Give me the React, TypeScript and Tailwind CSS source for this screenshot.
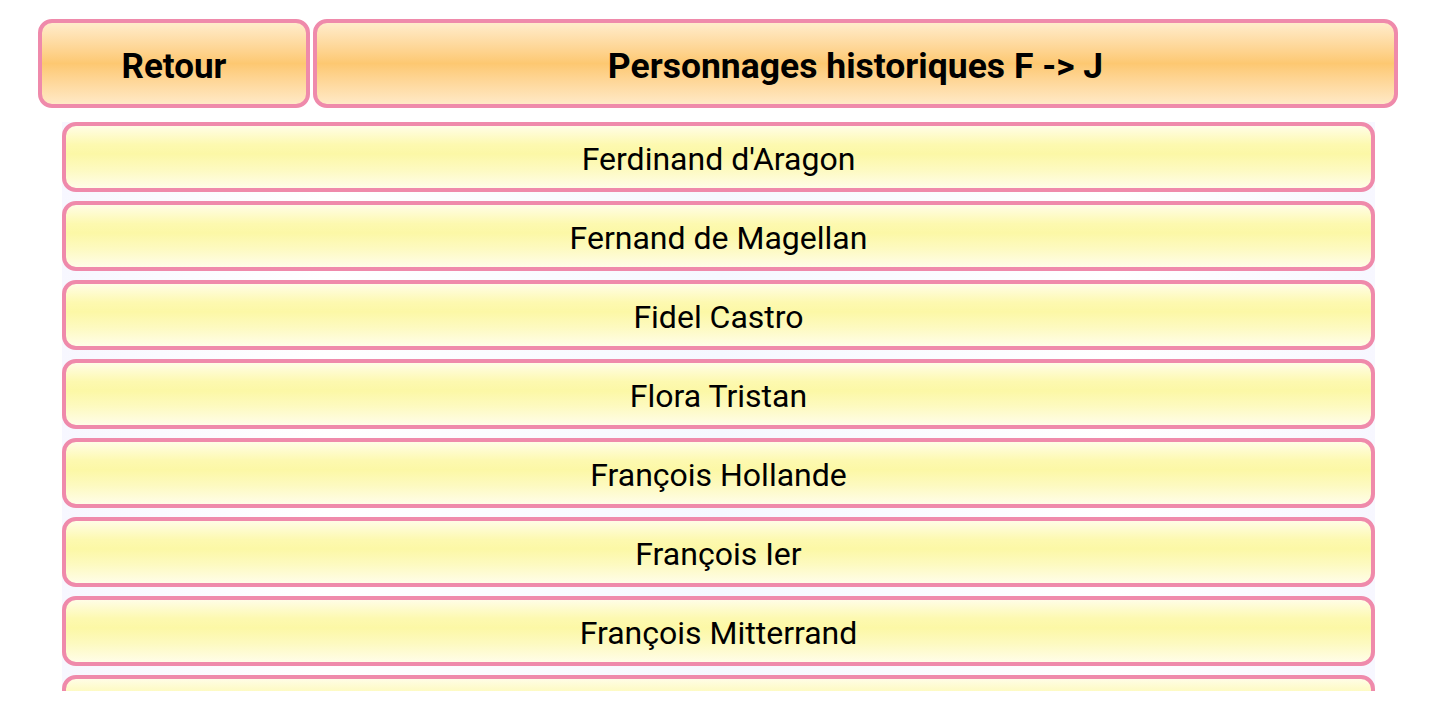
const names = [
  "Ferdinand d'Aragon",
  "Fernand de Magellan",
  "Fidel Castro",
  "Flora Tristan",
  "François Hollande",
  "François Ier",
  "François Mitterrand",
  "Frédéric Chopin",
];

export default function App() {
  return (
    <div className="h-[720px] w-[1440px] bg-white font-['Roboto',sans-serif] text-black overflow-hidden">
      {/* en-tête */}
      <div className="flex gap-[3px] pl-[38px] pr-[42px] pt-[19px]">
        <button className="h-[89px] w-[272px] shrink-0 rounded-[14px] border-4 border-[#ef8aab] bg-gradient-to-b from-[#ffeccb] via-[#fdc871] to-[#ffe9c6] pt-[7px] text-[35px] font-bold">
          Retour
        </button>
        <div className="flex h-[89px] flex-1 items-center justify-center rounded-[14px] border-4 border-[#ef8aab] bg-gradient-to-b from-[#ffeccb] via-[#fdc871] to-[#ffe9c6] pt-[7px] text-[35.5px] font-bold">
          Personnages historiques F -&gt; J
        </div>
      </div>

      {/* liste */}
      <div className="relative ml-[62px] mt-[14px] h-[569px] w-[1313px] overflow-hidden bg-[linear-gradient(90deg,#f7f7ff,#ffffff_20%,#f5f8ff_50%,#ffffff_80%,#f7f7ff)]">
        <div className="flex flex-col gap-[9px]">
          {names.map((n) => (
            <div
              key={n}
              className="flex h-[70px] shrink-0 items-center justify-center rounded-[14px] border-4 border-[#ef8aab] bg-[linear-gradient(180deg,#fffde6_0%,#fdf9b0_30%,#fcf8a6_45%,#fdfac0_70%,#fffde8_100%)] pt-[3px] text-[32px]"
            >
              {n}
            </div>
          ))}
        </div>
      </div>
    </div>
  );
}
